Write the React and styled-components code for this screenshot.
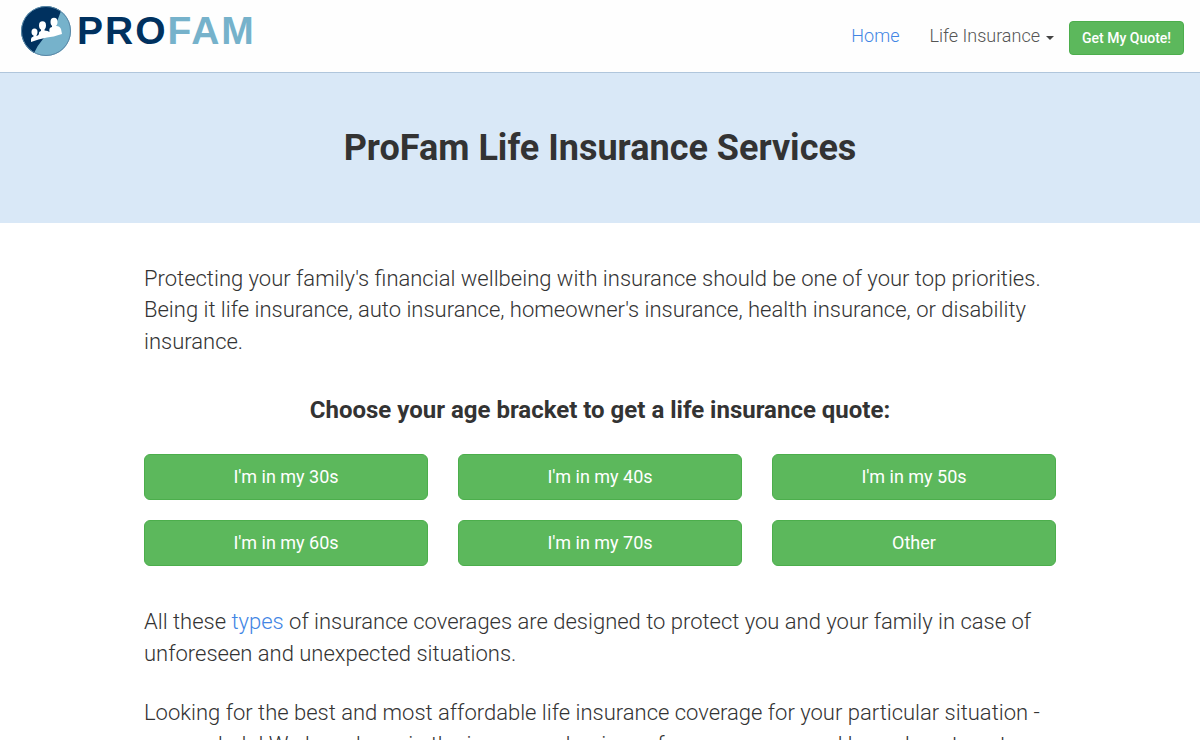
import React from 'react';
import styled, { createGlobalStyle } from 'styled-components';

const GlobalStyle = createGlobalStyle`
  *, *::before, *::after { box-sizing: border-box; }
  html { overflow-x: hidden; }
  body {
    margin: 0;
    background: #fff;
    color: #333;
    font-family: Roboto, "Liberation Sans", sans-serif;
    font-size: 22px;
    font-weight: 300;
    line-height: 1.43;
  }
`;

const Header = styled.header`
  display: flex;
  align-items: flex-start;
  justify-content: space-between;
  padding: 0 16px 0 20px;
  min-height: 73px;
  background: #fefefe;
  border-bottom: 1px solid #b0c6dc;
`;

const Brand = styled.a`
  display: flex;
  align-items: center;
  gap: 5px;
  padding-top: 5px;
  text-decoration: none;
`;

const Emblem = styled.svg`
  display: block;
  width: 52px;
  height: 52px;
`;

const Wordmark = styled.span`
  color: #00315f;
  font-family: "Liberation Sans", Arial, sans-serif;
  font-size: 39px;
  font-weight: 700;
  line-height: 52px;
  letter-spacing: 2px;
`;

const WordmarkAccent = styled.span`
  color: #76b2cb;
`;

const Nav = styled.nav`
  display: flex;
  align-items: center;
  gap: 30px;
  padding-top: 21px;
`;

const NavLink = styled.a`
  display: flex;
  align-items: center;
  gap: 6px;
  color: ${({ $active }) => ($active ? '#4285e4' : '#555')};
  font-size: 18px;
  line-height: 30px;
  padding-bottom: 4px;
  text-decoration: none;
`;

const Caret = styled.span`
  border-top: 4px solid #444;
  border-left: 4px solid transparent;
  border-right: 4px solid transparent;
  margin-top: 4px;
`;

const Button = styled.button`
  display: block;
  width: ${({ $compact }) => ($compact ? 'auto' : '100%')};
  padding: ${({ $compact }) => ($compact ? '6px 12px' : '10px 16px')};
  margin-left: ${({ $compact }) => ($compact ? '-15px' : '0')};
  border: 1px solid #4cae4c;
  border-radius: ${({ $compact }) => ($compact ? '4px' : '6px')};
  background: #5cb85c;
  color: #fff;
  font-family: inherit;
  font-size: ${({ $compact }) => ($compact ? '14px' : '18px')};
  font-weight: ${({ $compact }) => ($compact ? 500 : 400)};
  line-height: ${({ $compact }) => ($compact ? '20px' : '24px')};
  cursor: pointer;
`;

const Hero = styled.section`
  padding: 55px 16px;
  background: #d9e8f7;
  text-align: center;
`;

const Title = styled.h1`
  margin: 0;
  font-size: 36px;
  font-weight: 700;
  line-height: 40px;
`;

const Content = styled.main`
  max-width: 942px;
  margin: 0 auto;
  padding: 40px 15px;
`;

const Paragraph = styled.p`
  margin: 0 0 28px;
`;

const Subtitle = styled.h2`
  margin: 40px 0 30px;
  font-size: 24px;
  font-weight: 700;
  line-height: 27px;
  text-align: center;
`;

const Brackets = styled.div`
  display: grid;
  grid-template-columns: repeat(3, 1fr);
  gap: 20px 30px;
  margin-bottom: 40px;
`;

const TextLink = styled.a`
  color: #4285e4;
  text-decoration: none;
`;

const ages = ["I'm in my 30s", "I'm in my 40s", "I'm in my 50s", "I'm in my 60s", "I'm in my 70s", 'Other'];

export default function App() {
  return (
    <>
      <GlobalStyle />
      <Header>
        <Brand href="#" aria-label="ProFam">
          <Emblem viewBox="0 0 52 52" aria-hidden="true">
            <circle cx="26" cy="26" r="25" fill="#76b2cb" />
            <path d="M41 6A25 25 0 1 0 14 48Q17 41 23 34L34 22Q38 15 41 6Z" fill="#00315f" />
            <circle cx="26" cy="26" r="24.500" fill="none" stroke="#5b87a6" strokeWidth="1" />
            <g fill="#fff">
              <ellipse cx="14.500" cy="27" rx="3" ry="3.500" />
              <ellipse cx="22.500" cy="20.500" rx="3.500" ry="4.200" />
              <ellipse cx="34" cy="17" rx="3.500" ry="4.200" />
              <path d="M11 37V34Q11 32 13.500 31.500V29H16.500V31Q18.500 30.500 19 29Q18.500 26.500 21 26V23H24.500V25.500Q28 25.500 29.500 27Q28.500 22.500 32 22V19H35.500V21Q39.500 20.500 41 24L42 29Q33 32 27 32.500Q18 34 11 37Z" />
            </g>
          </Emblem>
          <Wordmark>PRO<WordmarkAccent>FAM</WordmarkAccent></Wordmark>
        </Brand>
        <Nav>
          <NavLink href="#" $active>Home</NavLink>
          <NavLink href="#">Life Insurance <Caret /></NavLink>
          <Button type="button" $compact>Get My Quote!</Button>
        </Nav>
      </Header>
      <Hero>
        <Title>ProFam Life Insurance Services</Title>
      </Hero>
      <Content>
        <Paragraph>
          Protecting your family's financial wellbeing with insurance should be one of your top
          priorities. Being it life insurance, auto insurance, homeowner's insurance, health
          insurance, or disability insurance.
        </Paragraph>
        <Subtitle>Choose your age bracket to get a life insurance quote:</Subtitle>
        <Brackets>
          {ages.map((age) => (
            <Button type="button" key={age}>{age}</Button>
          ))}
        </Brackets>
        <Paragraph>
          All these <TextLink href="#">types</TextLink> of insurance coverages are designed to
          protect you and your family in case of unforeseen and unexpected situations.
        </Paragraph>
        <Paragraph>
          Looking for the best and most affordable life insurance coverage for your particular
          situation - we can help! We have been in the insurance business for many years and know
          how to get
        </Paragraph>
      </Content>
    </>
  );
}
